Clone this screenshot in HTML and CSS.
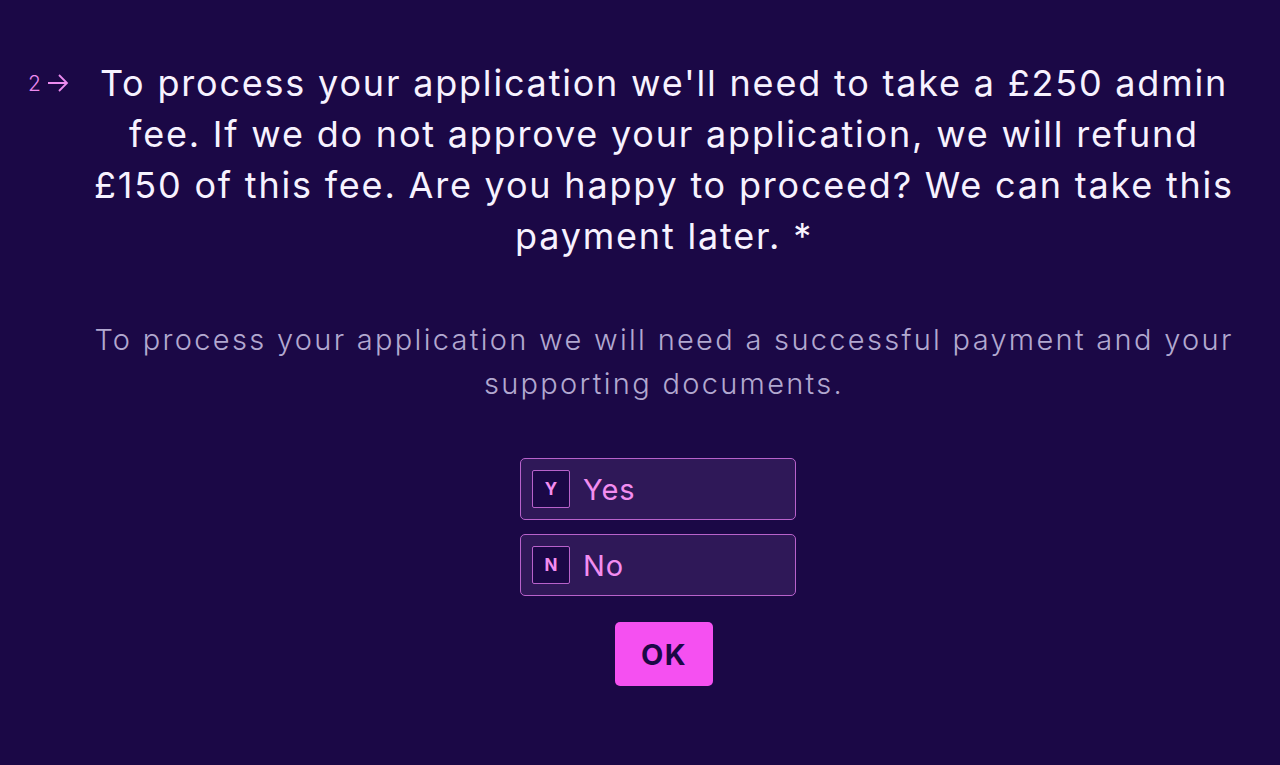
FILE: index.html
```html
<!DOCTYPE html>
<html lang="en">

<head>
    <meta charset="UTF-8">
    <meta name="viewport" content="width=device-width, initial-scale=1.0">
    <title>Application fee</title>
    <link rel="stylesheet" href="styles.css">
</head>

<body>
    <div class="question">
        <div class="counter">
            <span>2</span>
            <svg width="22" height="20" viewBox="0 0 22 20" fill="none" stroke="currentColor" stroke-width="1.8">
                <path d="M1 10h19M12 2l8 8-8 8" />
            </svg>
        </div>
        <div class="content">
            <h1>To process your application we'll need to take a £250 admin fee. If we do not approve your application, we will refund £150 of this fee. Are you happy to proceed? We can take this payment later. *</h1>
            <p class="description">To process your application we will need a successful payment and your supporting documents.</p>

            <div class="choices">
                <button type="button" class="choice"><span class="key">Y</span>Yes</button>
                <button type="button" class="choice"><span class="key">N</span>No</button>
            </div>

            <button type="button" class="ok-btn">OK</button>
        </div>
    </div>
</body>

</html>
```

FILE: styles.css
```css
body {
    margin: 0;
    background: #1b0846;
    font-family: Inter, "Noto Sans", sans-serif;
    color: #f7f2ff;
}

.question {
    display: flex;
    padding: 58px 44px 0 28px;
}

.counter {
    width: 64px;
    flex-shrink: 0;
    display: flex;
    align-items: center;
    gap: 6px;
    height: 50px;
    color: #ec8bef;
    font-size: 21px;
    font-weight: 300;
}

.content {
    flex: 1;
    text-align: center;
}

h1 {
    margin: 0;
    font-size: 36px;
    font-weight: 400;
    letter-spacing: 1.8px;
    line-height: 51px;
}

.description {
    margin: 56px 0 0;
    font-size: 29px;
    font-weight: 300;
    letter-spacing: 2.3px;
    line-height: 44px;
    color: #b2a8d0;
}

.choices {
    display: flex;
    flex-direction: column;
    align-items: center;
    gap: 14px;
    margin-top: 52px;
    margin-right: 12px;
}

.choice {
    display: flex;
    align-items: center;
    width: 276px;
    height: 62px;
    padding: 0 11px;
    box-sizing: border-box;
    background: #2f1858;
    border: 1.5px solid #b862cb;
    border-radius: 5px;
    color: #f38df0;
    font-family: inherit;
    font-size: 29px;
    font-weight: 400;
    letter-spacing: 1px;
    cursor: pointer;
    text-align: left;
}

.key {
    display: flex;
    align-items: center;
    justify-content: center;
    width: 38px;
    height: 38px;
    box-sizing: border-box;
    margin-right: 13px;
    border: 1.5px solid #b862cb;
    border-radius: 2px;
    background: #1b0846;
    font-size: 17px;
    font-weight: 700;
    letter-spacing: 0;
}

.ok-btn {
    margin-top: 26px;
    width: 98px;
    height: 64px;
    border: none;
    border-radius: 5px;
    background: #f550f1;
    color: #1b0846;
    font-family: inherit;
    font-size: 29px;
    font-weight: 700;
    letter-spacing: 1.5px;
    cursor: pointer;
}

.ok-btn:hover {
    background: #f76af3;
}
```
